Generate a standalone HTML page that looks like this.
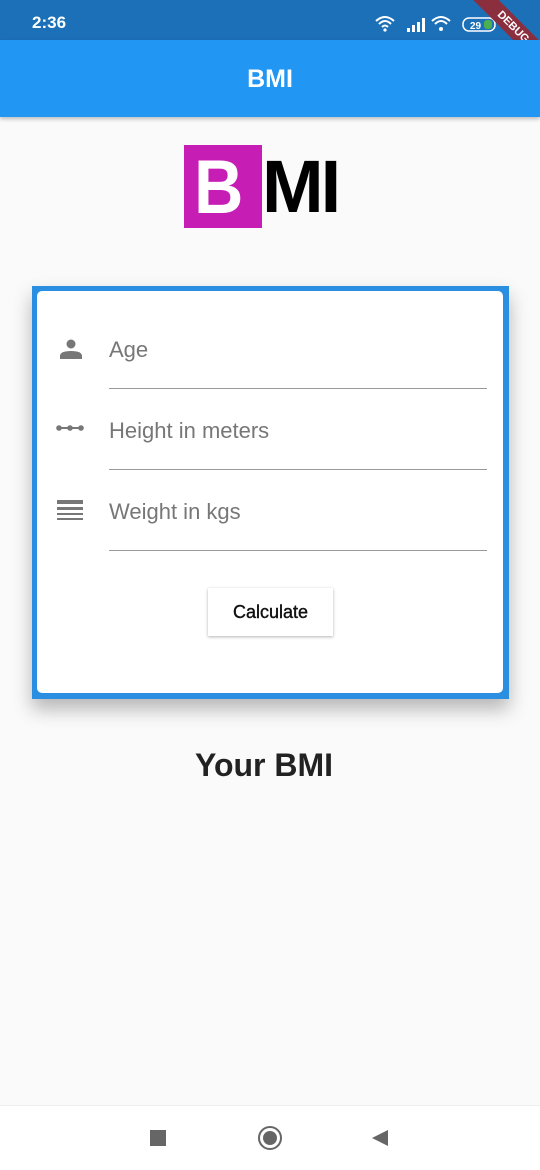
<!DOCTYPE html>
<html><head><meta charset="utf-8"><style>
*{margin:0;padding:0;box-sizing:border-box}
body{width:540px;height:1170px;background:#fafafa;font-family:"Liberation Sans",sans-serif;position:relative;overflow:hidden}
.status{position:absolute;top:0;left:0;width:540px;height:40px;background:#1c70b8;color:#fff}
.time{position:absolute;left:32px;top:13px;font-size:17px;font-weight:bold}
.appbar{position:absolute;top:40px;left:0;width:540px;height:77px;background:#2196f3;box-shadow:0 2px 4px rgba(0,0,0,.25);color:#fff;text-align:center;font-size:25px;line-height:78px;font-weight:bold}
.card{position:absolute;left:32px;top:286px;width:477px;height:413px;background:#2a8fe0;box-shadow:0 10px 18px rgba(0,0,0,.28)}
.inner{position:absolute;left:5px;top:5px;width:466px;height:402px;background:#fff;border-radius:5px}
.lbl{position:absolute;left:72px;font-size:22px;color:#777}
.line{position:absolute;left:72px;width:378px;height:1px;background:#999}
.btn{position:absolute;left:171px;top:297px;width:125px;height:48px;background:#fff;box-shadow:0 1px 3px rgba(0,0,0,.3);font-size:18px;text-align:center;line-height:48px;color:#111;-webkit-text-stroke:0.4px #111}
.your{position:absolute;top:747px;left:-6px;width:540px;text-align:center;font-size:32px;font-weight:bold;color:#222}
.nav{position:absolute;top:1105px;left:0;width:540px;height:65px;background:#fff;border-top:1px solid #eee}
</style></head><body>
<div class="status"><div class="time">2:36</div>
<svg style="position:absolute;left:374px;top:14px" width="130" height="20" viewBox="0 0 130 20">
<path d="M2 7 Q11 -1 20 7 M5 10 Q11 4 17 10 M8 13 Q11 10 14 13" stroke="#fff" stroke-width="2" fill="none"/><circle cx="11" cy="16" r="1.6" fill="#fff"/>
<rect x="33" y="14" width="3" height="4" fill="#fff"/><rect x="38" y="11" width="3" height="7" fill="#fff"/><rect x="43" y="8" width="3" height="10" fill="#fff"/><rect x="48" y="4" width="3" height="14" fill="#fff"/>
<path d="M58 7 Q67 -1 76 7 M61 10 Q67 4 73 10" stroke="#fff" stroke-width="2" fill="none"/><circle cx="67" cy="15" r="2" fill="#fff"/>
<rect x="89" y="4" width="32" height="13" rx="6" stroke="#fff" stroke-width="1.5" fill="none"/><rect x="110" y="6" width="8" height="9" rx="3" fill="#4caf50"/>
<text x="96" y="15" font-size="10" fill="#fff" font-family="Liberation Sans" font-weight="bold">29</text></svg>
<div style="position:absolute;right:-38px;top:18px;width:130px;height:18px;background:#8b2f3f;transform:rotate(45deg);color:#fff;font-size:11px;font-weight:bold;text-align:center;line-height:18px">DEBUG</div>
</div>
<div class="appbar">BMI</div>
<div style="position:absolute;left:184px;top:145px;width:78px;height:83px;background:#c61eb5"></div>
<div style="position:absolute;left:194px;top:144px;font-size:76px;font-weight:bold;color:#fff;line-height:88px;transform:scaleX(0.9);transform-origin:left">B</div>
<div style="position:absolute;left:262px;top:146px;font-size:74px;font-weight:bold;color:#000;line-height:82px;letter-spacing:-3px">MI</div>
<div class="card"><div class="inner">
<svg style="position:absolute;left:22px;top:46px" width="24" height="24" viewBox="0 0 24 24"><circle cx="12" cy="7" r="4.5" fill="#777"/><path d="M1 22 V19 Q1 14 12 14 Q23 14 23 19 V22Z" fill="#777"/></svg>
<div class="lbl" style="top:46px">Age</div><div class="line" style="top:97px"></div>
<svg style="position:absolute;left:18px;top:132px" width="30" height="10"><line x1="2" y1="5" x2="28" y2="5" stroke="#777" stroke-width="2"/><circle cx="4" cy="5" r="2.8" fill="#777"/><circle cx="15" cy="5" r="2.8" fill="#777"/><circle cx="26" cy="5" r="2.8" fill="#777"/></svg>
<div class="lbl" style="top:127px">Height in meters</div><div class="line" style="top:178px"></div>
<svg style="position:absolute;left:20px;top:209px" width="26" height="24"><rect y="0" width="26" height="4" fill="#777"/><rect y="7" width="26" height="3" fill="#777"/><rect y="13" width="26" height="2" fill="#777"/><rect y="18" width="26" height="2" fill="#777"/></svg>
<div class="lbl" style="top:208px">Weight in kgs</div><div class="line" style="top:259px"></div>
<div class="btn">Calculate</div>
</div></div>
<div class="your">Your BMI</div>
<div class="nav">
<div style="position:absolute;left:150px;top:24px;width:16px;height:16px;background:#666"></div>
<div style="position:absolute;left:258px;top:20px;width:24px;height:24px;border:2px solid #666;border-radius:50%"><div style="margin:3px;width:14px;height:14px;border-radius:50%;background:#666"></div></div>
<svg style="position:absolute;left:372px;top:24px" width="16" height="16"><path d="M0 8 L16 0 V16Z" fill="#666"/></svg>
</div>
</body></html>
